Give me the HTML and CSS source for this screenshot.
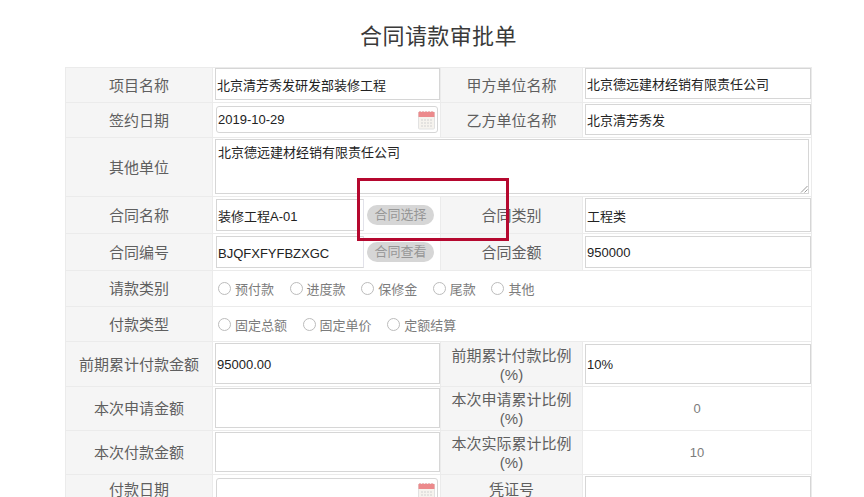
FILE: index.html
```html
<!DOCTYPE html>
<html lang="zh-CN">
<head>
<meta charset="utf-8">
<title>合同请款审批单</title>
<link rel="stylesheet" href="styles.css">
</head>
<body>
<main class="page">
  <h1 class="title">合同请款审批单</h1>
  <div class="sheet">
    <div class="label">项目名称</div>
    <div class="val"><div class="field">北京清芳秀发研发部装修工程</div></div>
    <div class="label">甲方单位名称</div>
    <div class="val end pb3"><div class="field">北京德远建材经销有限责任公司</div></div>

    <div class="label">签约日期</div>
    <div class="val date pt3 pb4"><div class="field rounded">2019-10-29
      <svg class="cal" viewBox="0 0 17 19"><rect x="0.5" y="1" width="16" height="17" rx="1" fill="#f6f3ee" stroke="#e2e2e2"/><rect x="0.5" y="1" width="16" height="5" fill="#ec8a8c"/><path d="M2 1V0M5 1V0M8 1V0M11 1V0M14 1V0" stroke="#ec8a8c"/><path d="M3 9h11M3 12h11M3 15h11" stroke="#d2d2d2" stroke-dasharray="2 1"/></svg>
    </div></div>
    <div class="label">乙方单位名称</div>
    <div class="val end pt1 pb2"><div class="field">北京清芳秀发</div></div>

    <div class="label">其他单位</div>
    <div class="val span3 pt1 pb2 pr2"><div class="field area">北京德远建材经销有限责任公司
      <svg class="grip" viewBox="0 0 8 8"><path d="M1 7.5L7.5 1M4.5 7.5L7.5 4.5" stroke="#999" fill="none"/></svg>
    </div></div>

    <div class="label">合同名称</div>
    <div class="val with-btn pt2 pb2"><div class="field short">装修工程A-01</div><button class="pill" type="button">合同选择</button></div>
    <div class="label">合同类别</div>
    <div class="val end pt1 pb1"><div class="field">工程类</div></div>

    <div class="label">合同编号</div>
    <div class="val with-btn pt2 pb2"><div class="field short low">BJQFXFYFBZXGC</div><button class="pill" type="button">合同查看</button></div>
    <div class="label">合同金额</div>
    <div class="val end pt2 pb2"><div class="field">950000</div></div>

    <div class="label">请款类别</div>
    <div class="val span3 plain radios">
      <label class="opt"><input type="radio" name="kind">预付款</label>
      <label class="opt"><input type="radio" name="kind">进度款</label>
      <label class="opt"><input type="radio" name="kind">保修金</label>
      <label class="opt"><input type="radio" name="kind">尾款</label>
      <label class="opt"><input type="radio" name="kind">其他</label>
    </div>

    <div class="label">付款类型</div>
    <div class="val span3 plain radios">
      <label class="opt"><input type="radio" name="pay">固定总额</label>
      <label class="opt"><input type="radio" name="pay">固定单价</label>
      <label class="opt"><input type="radio" name="pay">定额结算</label>
    </div>

    <div class="label">前期累计付款金额</div>
    <div class="val pt1 pb2"><div class="field low">95000.00</div></div>
    <div class="label two">前期累计付款比例<br>(%)</div>
    <div class="val end pt2 pb2"><div class="field">10%</div></div>

    <div class="label">本次申请金额</div>
    <div class="val pt1 pb2"><div class="field"></div></div>
    <div class="label two">本次申请累计比例<br>(%)</div>
    <div class="val end plain center">0</div>

    <div class="label">本次付款金额</div>
    <div class="val pt1 pb2"><div class="field"></div></div>
    <div class="label two">本次实际累计比例<br>(%)</div>
    <div class="val end plain center">10</div>

    <div class="label">付款日期</div>
    <div class="val date pt3 last"><div class="field rounded">
      <svg class="cal" viewBox="0 0 17 19"><rect x="0.5" y="1" width="16" height="17" rx="1" fill="#f6f3ee" stroke="#e2e2e2"/><rect x="0.5" y="1" width="16" height="5" fill="#ec8a8c"/><path d="M2 1V0M5 1V0M8 1V0M11 1V0M14 1V0" stroke="#ec8a8c"/><path d="M3 9h11M3 12h11M3 15h11" stroke="#d2d2d2" stroke-dasharray="2 1"/></svg>
    </div></div>
    <div class="label">凭证号</div>
    <div class="val end pt1 last"><div class="field"></div></div>
  </div>
</main>
<div class="highlight"></div>
</body>
</html>
```

FILE: styles.css
```css
html, body {
  margin: 0;
  height: 497px;
  overflow: hidden;
  background: #fff;
}

body {
  font-family: "Liberation Sans", "Noto Sans CJK SC", sans-serif;
  color: #222;
}

.page {
  width: 747px;
  padding-left: 65px;
}

.title {
  margin: 0;
  padding: 21px 0 14px;
  font-size: 22px;
  font-weight: 400;
  line-height: 32px;
  letter-spacing: 0.4px;
  text-align: center;
  color: #3a3a3a;
}

.sheet {
  display: grid;
  grid-template-columns: 147px 228px 142px 229px;
  grid-template-rows: 35px 35px 59px 37px 37px 36px 35px 45px 44px 44px 30px;
  border-top: 1px solid #ebebeb;
  border-left: 1px solid #ebebeb;
}

.label,
.val {
  display: flex;
  box-sizing: border-box;
  border-right: 1px solid #ebebeb;
  border-bottom: 1px solid #ebebeb;
}

.label {
  align-items: center;
  justify-content: center;
  background: #f5f5f5;
  color: #5f5f5f;
  font-size: 15px;
  line-height: 19px;
  text-align: center;
}

.two {
  padding-top: 1px;
}

.val {
  padding: 0 0 2px 2px;
  background: #fff;
  font-size: 13px;
}

.pt1 { padding-top: 1px; }
.pt2 { padding-top: 2px; }
.pt3 { padding-top: 3px; }
.pb1 { padding-bottom: 1px; }
.pb2 { padding-bottom: 2px; }
.pb3 { padding-bottom: 3px; }
.pb4 { padding-bottom: 4px; }
.pr2 { padding-right: 2px; }

.date {
  padding-left: 3px;
  padding-right: 2px;
}

.last {
  padding-bottom: 0;
}

.span3 {
  grid-column: span 3;
}

.field {
  position: relative;
  flex: 1;
  display: flex;
  align-items: center;
  box-sizing: border-box;
  min-width: 0;
  padding-left: 1px;
  background: #fff;
  border: 1px solid #d6d6d6;
}

.low {
  padding-top: 2px;
}

.rounded {
  border-radius: 3px;
}

.area {
  align-items: flex-start;
  padding-top: 4px;
  padding-left: 2px;
  line-height: 18px;
}

.cal {
  position: absolute;
  top: 4px;
  right: 2px;
  width: 17px;
  height: 19px;
}

.grip {
  position: absolute;
  right: 0;
  bottom: 0;
  width: 8px;
  height: 8px;
}

.with-btn {
  gap: 3px;
  padding-left: 3px;
}

.short {
  flex: 0 0 148px;
  border-right-color: #e2e2ea;
}

.pill {
  align-self: center;
  width: 67px;
  height: 20px;
  padding: 0;
  border: 0;
  border-radius: 10px;
  background: #d6d6d6;
  color: #969696;
  font: inherit;
  line-height: 20px;
}

.plain {
  align-items: center;
  padding: 0 0 0 5px;
  color: #7c7c7c;
}

.center {
  justify-content: center;
  padding-left: 0;
}

.radios {
  gap: 15.6px;
}

.opt {
  display: flex;
  align-items: center;
  gap: 4px;
}

.opt input {
  appearance: none;
  box-sizing: border-box;
  width: 13px;
  height: 13px;
  margin: 0;
  border: 1px solid #bcbcbc;
  border-radius: 50%;
  background: #fff;
}

.highlight {
  position: absolute;
  left: 357px;
  top: 178px;
  box-sizing: border-box;
  width: 152px;
  height: 63px;
  border: 3px solid #b5082f;
}
```
